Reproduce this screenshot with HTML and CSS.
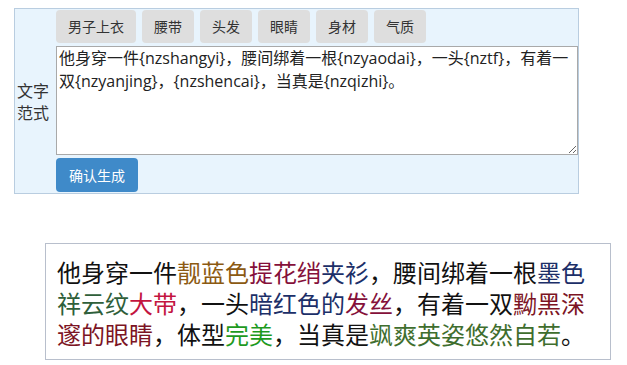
FILE: index.html
```html
<!DOCTYPE html>
<html lang="zh-CN">
<head>
  <meta charset="UTF-8">
  <title>文字范式</title>
  <link rel="stylesheet" href="styles.css">
</head>
<body>
  <table class="form-table">
    <tr>
      <td class="label-cell">文字<br>范式</td>
      <td class="field-cell">
        <div class="tag-row">
          <button class="tag">男子上衣</button>
          <button class="tag">腰带</button>
          <button class="tag">头发</button>
          <button class="tag">眼睛</button>
          <button class="tag">身材</button>
          <button class="tag">气质</button>
        </div>
        <textarea class="template">他身穿一件{nzshangyi}，腰间绑着一根{nzyaodai}，一头{nztf}，有着一双{nzyanjing}，{nzshencai}，当真是{nzqizhi}。</textarea>
        <button class="submit">确认生成</button>
      </td>
    </tr>
  </table>

  <div class="result">
    他身穿一件<span class="c-brown">靓蓝色</span><span class="c-maroon">提花绡</span><span class="c-navy">夹衫</span>，腰间绑着一根<span class="c-navy">墨色</span><span class="c-green">祥云纹</span><span class="c-red">大带</span>，一头<span class="c-navy">暗红色的</span><span class="c-maroon">发丝</span>，有着一双<span class="c-darkred">黝黑深邃的眼睛</span>，体型<span class="c-lime">完美</span>，当真是<span class="c-olive">飒爽英姿悠然自若</span>。
  </div>
</body>
</html>
```

FILE: styles.css
```css
body {
  margin: 8px 0 0 14px;
  font-family: "Noto Sans CJK SC", "Noto Sans", sans-serif;
  color: #222;
  background: #fff;
}
.form-table {
  width: 565px;
  border-collapse: collapse;
  background-color: #e8f4fd;
  border: 1px solid #b9cde0;
}
.form-table td {
  padding: 0;
  vertical-align: middle;
}
.label-cell {
  width: 41px;
  padding-left: 2px !important;
  font-size: 16px;
  line-height: 22px;
  color: #333;
}
.field-cell {
  padding: 1px 0 0 0 !important;
}
.tag-row {
  display: flex;
  gap: 6px;
  height: 33px;
}
.tag {
  font-family: inherit;
  font-size: 14px;
  line-height: 20px;
  padding: 6px 12px 7px;
  background-color: #dedede;
  color: #333;
  border: none;
  border-radius: 4px;
}
.template {
  display: block;
  box-sizing: border-box;
  width: 522px;
  height: 109px;
  margin-top: 3px;
  padding: 0 2px;
  font-family: "Open Sans", "Noto Sans CJK SC", sans-serif;
  font-size: 16px;
  line-height: 23px;
  color: #222;
  border: 1px solid #a9a9a9;
  resize: both;
}
.submit {
  display: block;
  margin: 3px 0 1px;
  width: 82px;
  height: 34px;
  font-family: inherit;
  font-size: 14px;
  color: #fff;
  background-color: #3f8ac9;
  border: none;
  border-radius: 4px;
}
.result {
  box-sizing: border-box;
  width: 566px;
  margin: 49px 0 0 31px;
  padding: 12px 11px 10px;
  font-size: 24px;
  line-height: 31px;
  color: #111;
  border: 1px solid #b8bfcc;
}
.c-brown { color: #8c5a12; }
.c-maroon { color: #85103a; }
.c-navy { color: #1c2f68; }
.c-green { color: #2f5f3a; }
.c-red { color: #c3153f; }
.c-darkred { color: #7c1424; }
.c-lime { color: #1e9a1e; }
.c-olive { color: #3f6e2e; }
```
